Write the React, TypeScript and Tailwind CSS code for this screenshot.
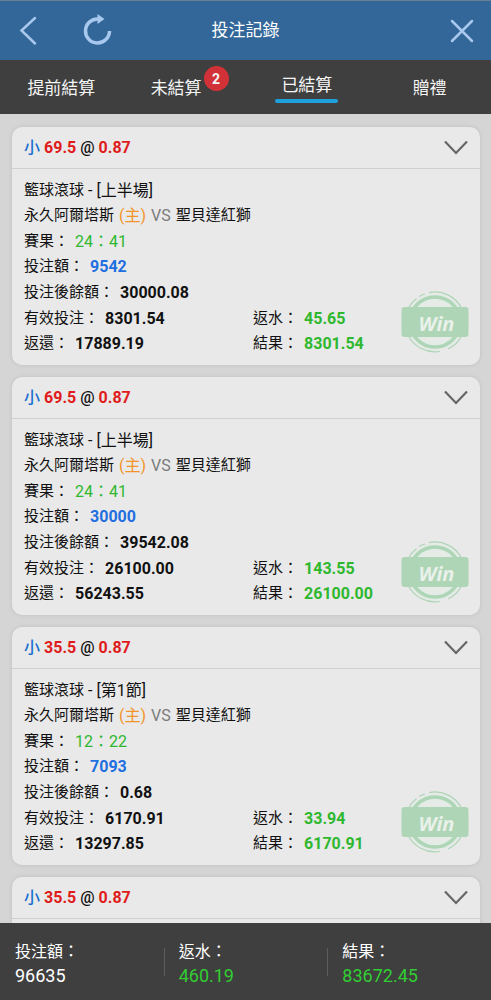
import type { ReactNode } from "react";

type Details = {
  period: string;
  score: string;
  stake: string;
  balance: string;
  valid: string;
  returned: string;
  rebate: string;
  result: string;
};

type Bet = { id: number; line: string; odds: string; details?: Details };

const bets: Bet[] = [
  {
    id: 1,
    line: "69.5",
    odds: "0.87",
    details: {
      period: "上半場",
      score: "24：41",
      stake: "9542",
      balance: "30000.08",
      valid: "8301.54",
      returned: "17889.19",
      rebate: "45.65",
      result: "8301.54",
    },
  },
  {
    id: 2,
    line: "69.5",
    odds: "0.87",
    details: {
      period: "上半場",
      score: "24：41",
      stake: "30000",
      balance: "39542.08",
      valid: "26100.00",
      returned: "56243.55",
      rebate: "143.55",
      result: "26100.00",
    },
  },
  {
    id: 3,
    line: "35.5",
    odds: "0.87",
    details: {
      period: "第1節",
      score: "12：22",
      stake: "7093",
      balance: "0.68",
      valid: "6170.91",
      returned: "13297.85",
      rebate: "33.94",
      result: "6170.91",
    },
  },
  { id: 4, line: "35.5", odds: "0.87" },
];

const totals = [
  { label: "投注額：", value: "96635", color: "text-white" },
  { label: "返水：", value: "460.19", color: "text-[#32cd32]" },
  { label: "結果：", value: "83672.45", color: "text-[#32cd32]" },
];

function Field({ label, color, children }: { label: string; color: string; children: ReactNode }) {
  return (
    <div className="flex items-center gap-1.5">
      <dt>{label}：</dt>
      <dd className={`text-base/[25px] ${color}`}>{children}</dd>
    </div>
  );
}

function WinStamp() {
  return (
    <svg
      role="img"
      aria-label="Win"
      className="absolute right-[11px] bottom-3 h-[62px] w-[68px]"
      viewBox="0 0 68 62"
      fill="none"
    >
      <circle cx="34" cy="31" r="28" fill="#dfede4" />
      <circle cx="34" cy="31" r="22" fill="#e6ebe8" />
      <circle cx="34" cy="31" r="25" stroke="#aed5b6" strokeWidth="3.5" />
      <path
        d="M28 1.600A30 30 0 0 1 61 18M18 5.500A30 30 0 0 1 24 3M7 18A30 30 0 0 1 15.500 7.500M61 44A30 30 0 0 1 47 58M39 60.500A30 30 0 0 1 7 44"
        stroke="#aed5b6"
        strokeWidth="1.2"
      />
      <rect x="0.500" y="16" width="67" height="30" rx="3" fill="#aed5b6" />
      <text
        x="35.500"
        y="39.500"
        textAnchor="middle"
        className="fill-[#e9f1ea] font-['Open_Sans',sans-serif] text-[20px] font-bold italic"
      >
        Win
      </text>
    </svg>
  );
}

function BetCard({ bet }: { bet: Bet }) {
  const d = bet.details;
  return (
    <article className="relative shrink-0 rounded-[10px] bg-[#e9e9e9] shadow-[0_0_4px_rgba(0,0,0,0.1)]">
      <header className="flex h-[42px] items-center justify-between border-b border-[#d0d0d0] px-3">
        <h2 className="flex items-center gap-1 text-base font-bold text-[#e01b1b]">
          <span className="font-medium text-[#1b6fd0]">小</span>
          <span>{bet.line}</span>
          <span className="font-medium text-[#111]">@</span>
          <span>{bet.odds}</span>
        </h2>
        <button type="button" aria-label="收合">
          <svg className="h-6 w-6" viewBox="0 0 24 24" fill="none" stroke="#666" strokeWidth="2.2">
            <path d="M1 5.500L12 17L23 5.500" />
          </svg>
        </button>
      </header>
      <div className="px-3 py-[9px] text-[15px]/[25px] text-[#111]">
        {d && (
          <div className="flex flex-col gap-px">
            <div>
              <p className="flex items-center gap-1">
                <span>籃球滾球</span>
                <span className="text-base/[25px]">- [{d.period}]</span>
              </p>
              <p className="flex items-center gap-[5px]">
                <span>永久阿爾塔斯</span>
                <span className="text-base/[25px] text-[#f2942a]">(主)</span>
                <span className="text-base/[25px] text-[#7b7b7b]">VS</span>
                <span>聖貝達紅獅</span>
              </p>
            </div>
            <dl>
              <Field label="賽果" color="text-[#2eb82e]">{d.score}</Field>
              <Field label="投注額" color="font-bold text-[#1f6fe0]">{d.stake}</Field>
            </dl>
            <dl>
              <Field label="投注後餘額" color="font-bold">{d.balance}</Field>
            </dl>
            <dl className="grid grid-cols-[229fr_215fr]">
              <Field label="有效投注" color="font-bold">{d.valid}</Field>
              <Field label="返水" color="font-bold text-[#2eb82e]">{d.rebate}</Field>
              <Field label="返還" color="font-bold">{d.returned}</Field>
              <Field label="結果" color="font-bold text-[#2eb82e]">{d.result}</Field>
            </dl>
          </div>
        )}
      </div>
      {d && <WinStamp />}
    </article>
  );
}

export default function App() {
  return (
    <div
      lang="zh-Hant"
      className="flex h-screen flex-col bg-[#d5d5d5] font-[Roboto,'Noto_Sans_CJK_TC',sans-serif]"
    >
      <header className="grid h-[60px] shrink-0 grid-cols-[1fr_auto_1fr] items-center border-t border-[#6b7f93] bg-[#336799] px-3 text-[#a9c8ee]">
        <div className="flex items-center gap-9">
          <button type="button" aria-label="返回">
            <svg className="h-8 w-8" viewBox="0 0 32 32" fill="none" stroke="currentColor" strokeWidth="2.500" strokeLinecap="round">
              <path d="M23 3L9.500 15.500L23 28.500" />
            </svg>
          </button>
          <button type="button" aria-label="重新整理">
            <svg className="h-9 w-9" viewBox="0 0 36 36" fill="none" stroke="currentColor" strokeWidth="3.500">
              <path d="M18.500 6A12 12 0 1 0 29.500 18" />
              <path d="M17.500 1L24.500 6L17.500 11Z" fill="currentColor" stroke="none" />
            </svg>
          </button>
        </div>
        <h1 className="text-[17px] text-white">投注記錄</h1>
        <button type="button" aria-label="關閉" className="justify-self-end">
          <svg className="h-9 w-9" viewBox="0 0 36 36" fill="none" stroke="currentColor" strokeWidth="2.500" strokeLinecap="round">
            <path d="M9 8L29 28M29 8L9 28" />
          </svg>
        </button>
      </header>

      <nav className="grid h-[54px] shrink-0 grid-cols-4 items-center justify-items-center bg-[#3f3f3f] pt-1 text-[17px] text-[#f5f5f5]">
        <button type="button">提前結算</button>
        <button type="button" className="relative mr-4">
          未結算
          <span className="absolute -top-2.5 left-full ml-0.5 flex size-[25px] items-center justify-center rounded-full bg-[#d23237] text-sm font-bold">
            2
          </span>
        </button>
        <button type="button" aria-current="page" className="mb-0.5 px-1.5">
          <span className="block">已結算</span>
          <span className="-mx-1.5 block h-1 rounded-full bg-[#1ea0dc]" />
        </button>
        <button type="button">贈禮</button>
      </nav>

      <main className="flex min-h-0 flex-1 flex-col gap-3 overflow-y-auto pt-[13px] pr-[11px] pl-3 [scrollbar-width:none]">
        {bets.map((bet) => (
          <BetCard key={bet.id} bet={bet} />
        ))}
      </main>

      <footer className="shrink-0 bg-[#3f3f3f] pt-[17px] pb-3">
        <dl className="grid grid-cols-3">
          {totals.map((t, i) => (
            <div key={t.label} className="relative pl-[15px]">
              {i > 0 && <span className="absolute top-2 left-0 h-7 w-px bg-[#5c5c5c]" />}
              <dt className="text-base/6 text-white">{t.label}</dt>
              <dd className={`text-lg/6 ${t.color}`}>{t.value}</dd>
            </div>
          ))}
        </dl>
      </footer>
    </div>
  );
}
